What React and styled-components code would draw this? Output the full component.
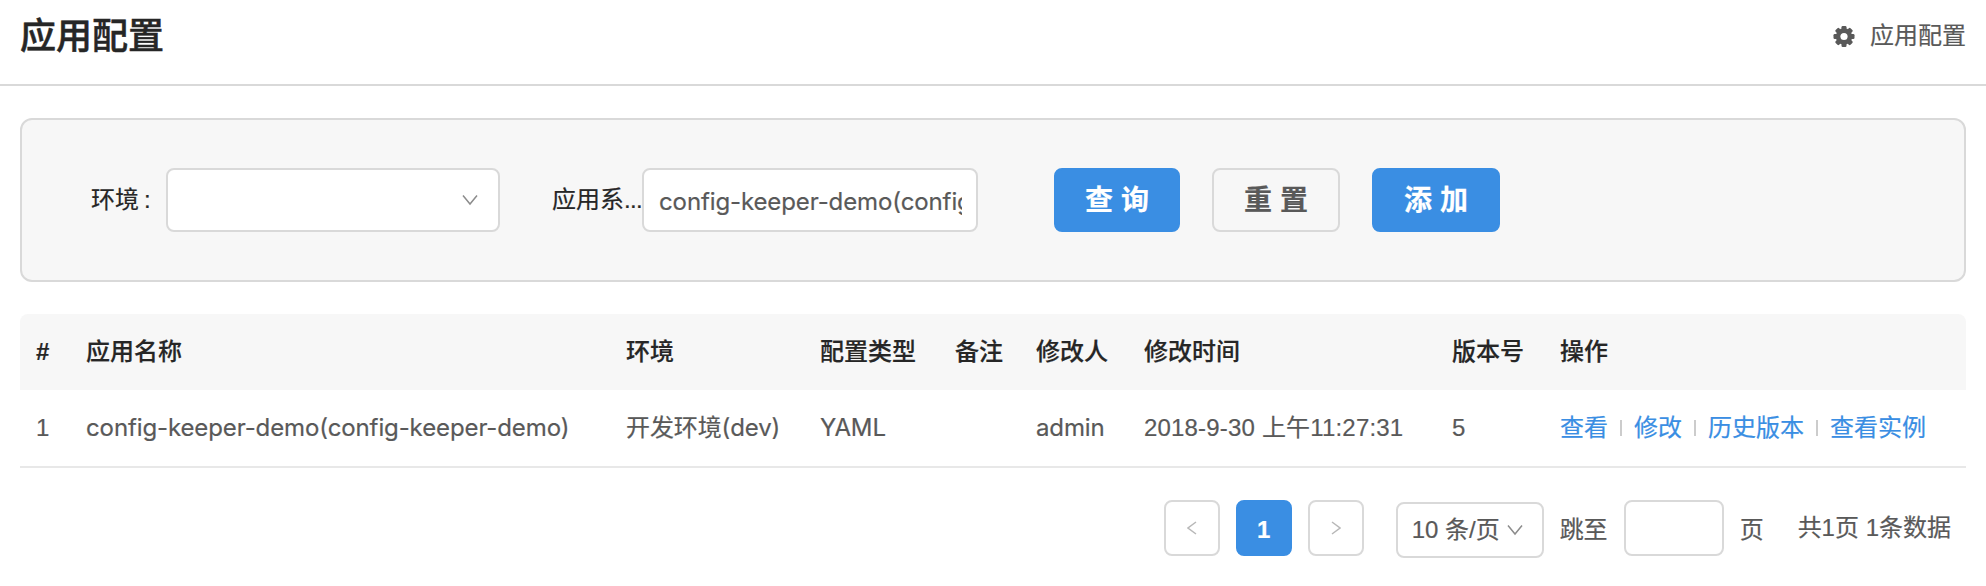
import React from 'react';
import styled, { createGlobalStyle, css } from 'styled-components';

const Global = createGlobalStyle`
  * { box-sizing: border-box; }
  body {
    margin: 0;
    background: #fff;
    color: #595959;
    font: 24px/36px "Liberation Sans", "Noto Sans CJK SC", sans-serif;
    -webkit-text-stroke: 0.2px currentColor;
  }
`;

const border = '2px solid #d9d9d9';

const Header = styled.header`
  display: flex;
  justify-content: space-between;
  height: 86px;
  padding: 0 20px;
  border-bottom: ${border};
`;

const Title = styled.h1`
  margin: 10px 0 0;
  font-size: 36px;
  line-height: 54px;
  font-weight: 500;
  color: #262626;
  -webkit-text-stroke: 0.5px #262626;
`;

const Crumb = styled.div`
  display: flex;
  align-items: center;
  gap: 15px;
  height: 36px;
  margin-top: 18px;
`;

const Content = styled.main`
  padding: 32px 20px 28px;
`;

const Panel = styled.section`
  display: flex;
  align-items: center;
  height: 164px;
  padding-left: 69px;
  border: ${border};
  border-radius: 12px;
  background: #f7f7f7;
`;

const Label = styled.label`
  display: flex;
  width: ${(p) => p.$width}px;
  margin-left: ${(p) => p.$gap || 0}px;
  color: #262626;
  white-space: nowrap;
`;

const Colon = styled.span`
  margin-left: 5px;
`;

const Dots = styled.span`
  letter-spacing: -0.7px;
`;

const fieldBox = css`
  width: ${(p) => p.$width}px;
  height: ${(p) => p.$height || 64}px;
  border: ${border};
  border-radius: 8px;
  background: #fff;
`;

const Field = styled.div`
  display: flex;
  align-items: center;
  justify-content: ${(p) => (p.$end ? 'flex-end' : 'flex-start')};
  padding: 0 ${(p) => p.$pad || 14}px;
  ${fieldBox}
`;

const latin = css`
  font-family: Inter, "Noto Sans CJK SC", sans-serif;
  letter-spacing: -0.11px;
`;

const Input = styled.input`
  ${fieldBox}
  padding: 2px 14px 0 15px;
  color: #595959;
  font-size: 24px;
  -webkit-text-stroke: inherit;
  ${latin}
`;

const Actions = styled.div`
  display: flex;
  gap: 32px;
  margin-left: 76px;
`;

const Button = styled.button`
  width: ${(p) => p.$width || 128}px;
  height: 64px;
  padding: 2px 0 0;
  border: 2px solid ${(p) => (p.$primary ? '#3a8ee3' : '#d9d9d9')};
  border-radius: 8px;
  background: ${(p) => (p.$primary ? '#3a8ee3' : 'transparent')};
  color: ${(p) => (p.$primary ? '#fff' : '#595959')};
  font: 700 28px/40px "Liberation Sans", "Noto Sans CJK SC", sans-serif;
`;

const Table = styled.table`
  width: 100%;
  margin-top: 32px;
  table-layout: fixed;
  border-collapse: separate;
  border-spacing: 0;
  text-align: left;
  white-space: nowrap;
`;

const Th = styled.th`
  height: 76px;
  padding: 0 0 0 16px;
  background: #f7f7f7;
  color: #262626;
  font-weight: 500;
  &:first-child {
    border-top-left-radius: 8px;
    font-weight: 700;
  }
  &:last-child { border-top-right-radius: 8px; }
`;

const Td = styled.td`
  height: 78px;
  padding: 0 0 0 16px;
  border-bottom: 2px solid #e8e8e8;
  ${(p) => p.$latin && latin}
`;

const TimeCell = styled(Td)`
  letter-spacing: 0.18px;
`;

const Links = styled.div`
  display: flex;
  align-items: center;
`;

const Link = styled.a`
  color: #3a8ee3;
  & + & {
    display: flex;
    align-items: center;
  }
  & + &::before {
    content: '';
    width: 2px;
    height: 16px;
    margin: 0 12px;
    background: #ccc;
  }
`;

const Pagination = styled.nav`
  display: flex;
  align-items: center;
  justify-content: flex-end;
  gap: 16px;
  height: 56px;
  margin-top: 32px;
  padding-right: 15px;
`;

const Page = styled.button`
  display: flex;
  align-items: center;
  justify-content: center;
  width: 56px;
  height: 56px;
  padding: ${(p) => (p.$active ? '3px 0 0' : 0)};
  border: 2px solid ${(p) => (p.$active ? '#3a8ee3' : '#d9d9d9')};
  border-radius: 8px;
  background: ${(p) => (p.$active ? '#3a8ee3' : '#fff')};
  color: ${(p) => (p.$active ? '#fff' : '#b8b8b8')};
  font: 700 24px/36px "Liberation Sans", sans-serif;
`;

const SizeSelect = styled(Field)`
  gap: 7px;
  flex: none;
  margin: 4px 0 0 16px;
`;

const Hint = styled.span`
  padding-top: 3px;
`;

const Total = styled.span`
  margin-left: 18px;
`;

const chevrons = {
  down: { w: 16, h: 12, d: 'M1 1.5 8 10 15 1.5' },
  left: { w: 10, h: 14, d: 'M9 1 1 7l8 6' },
  right: { w: 10, h: 14, d: 'M1 1l8 6-8 6' },
};

const Chevron = ({ dir = 'down', color = '#8c8c8c' }) => {
  const { w, h, d } = chevrons[dir];
  return (
    <svg width={w} height={h} viewBox={`0 0 ${w} ${h}`} fill="none" stroke={color} strokeWidth="1.5">
      <path d={d} />
    </svg>
  );
};

const Gear = () => (
  <svg width="22" height="22" viewBox="-11 -11.5 22 22">
    <g fill="#595959">
      {[0, 45, 90, 135].map((a) => (
        <rect key={a} x="-2.5" y="-10.5" width="5" height="21" rx="1.2" transform={`rotate(${a})`} />
      ))}
    </g>
    <circle r="5.9" fill="none" stroke="#595959" strokeWidth="4.6" />
    <circle r="3.6" fill="#fff" />
  </svg>
);

const columns = [
  ['#', 50],
  ['应用名称', 540],
  ['环境', 194],
  ['配置类型', 135],
  ['备注', 81],
  ['修改人', 108],
  ['修改时间', 308],
  ['版本号', 108],
  ['操作', 422],
];

const links = ['查看', '修改', '历史版本', '查看实例'];

export default function App() {
  return (
    <>
      <Global />
      <Header>
        <Title>应用配置</Title>
        <Crumb><Gear />应用配置</Crumb>
      </Header>
      <Content>
        <Panel>
          <Label $width={75}>环境<Colon>:</Colon></Label>
          <Field $width={334} $end $pad={20}><Chevron /></Field>
          <Label $width={90} $gap={52}>应用系<Dots>...</Dots></Label>
          <Input $width={336} defaultValue="config-keeper-demo(config-keeper-demo)" />
          <Actions>
            <Button $primary $width={126}>查 询</Button>
            <Button>重 置</Button>
            <Button $primary>添 加</Button>
          </Actions>
        </Panel>
        <Table>
          <colgroup>
            {columns.map(([name, width]) => <col key={name} width={width} />)}
          </colgroup>
          <thead>
            <tr>{columns.map(([name]) => <Th key={name}>{name}</Th>)}</tr>
          </thead>
          <tbody>
            <tr>
              <Td>1</Td>
              <Td $latin>config-keeper-demo(config-keeper-demo)</Td>
              <Td $latin>开发环境(dev)</Td>
              <Td $latin>YAML</Td>
              <Td />
              <Td $latin>admin</Td>
              <TimeCell>2018-9-30 上午11:27:31</TimeCell>
              <Td>5</Td>
              <Td><Links>{links.map((t) => <Link key={t}>{t}</Link>)}</Links></Td>
            </tr>
          </tbody>
        </Table>
        <Pagination>
          <Page><Chevron dir="left" color="#b8b8b8" /></Page>
          <Page $active>1</Page>
          <Page><Chevron dir="right" color="#b8b8b8" /></Page>
          <SizeSelect $width={148} $height={56}>10 条/页<Chevron /></SizeSelect>
          <Hint>跳至</Hint>
          <Field $width={100} $height={56} />
          <Hint>页</Hint>
          <Total>共1页 1条数据</Total>
        </Pagination>
      </Content>
    </>
  );
}
